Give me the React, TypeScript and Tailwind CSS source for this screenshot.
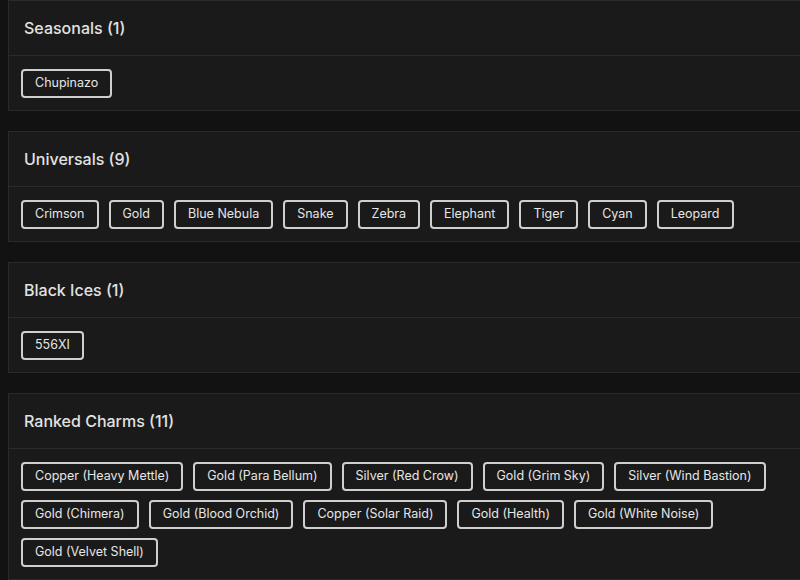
import React from "react";

const sections: { title: string; items: string[] }[] = [
  { title: "Seasonals (1)", items: ["Chupinazo"] },
  {
    title: "Universals (9)",
    items: ["Crimson", "Gold", "Blue Nebula", "Snake", "Zebra", "Elephant", "Tiger", "Cyan", "Leopard"],
  },
  { title: "Black Ices (1)", items: ["556XI"] },
  {
    title: "Ranked Charms (11)",
    items: [
      "Copper (Heavy Mettle)",
      "Gold (Para Bellum)",
      "Silver (Red Crow)",
      "Gold (Grim Sky)",
      "Silver (Wind Bastion)",
      "Gold (Chimera)",
      "Gold (Blood Orchid)",
      "Copper (Solar Raid)",
      "Gold (Health)",
      "Gold (White Noise)",
      "Gold (Velvet Shell)",
    ],
  },
];

export default function App() {
  return (
    <div
      className="w-[800px] h-[580px] overflow-hidden bg-[#121212]"
      style={{ fontFamily: "Inter, 'Noto Sans', sans-serif" }}
    >
      <div className="flex flex-col gap-5 pl-2 w-[830px]">
        {sections.map((s) => (
          <div key={s.title} className="border border-[#2a2a2a] bg-[#1a1a1a]">
            <div className="h-[55px] flex items-center px-[15px] border-b border-[#2a2a2a]">
              <span className="text-[16px] font-medium text-[#e2e2e2]">{s.title}</span>
            </div>
            <div className="flex flex-wrap gap-x-2.5 gap-y-[9px] w-[790px] pl-3 pt-[13px] pb-[12px]">
              {s.items.map((it) => (
                <div
                  key={it}
                  className="h-[29px] px-[12px] flex items-center border-2 border-[#cfcfcf] rounded-[4px] text-[12.5px] text-[#e6e6e6] leading-none"
                >
                  {it}
                </div>
              ))}
            </div>
          </div>
        ))}
      </div>
    </div>
  );
}
